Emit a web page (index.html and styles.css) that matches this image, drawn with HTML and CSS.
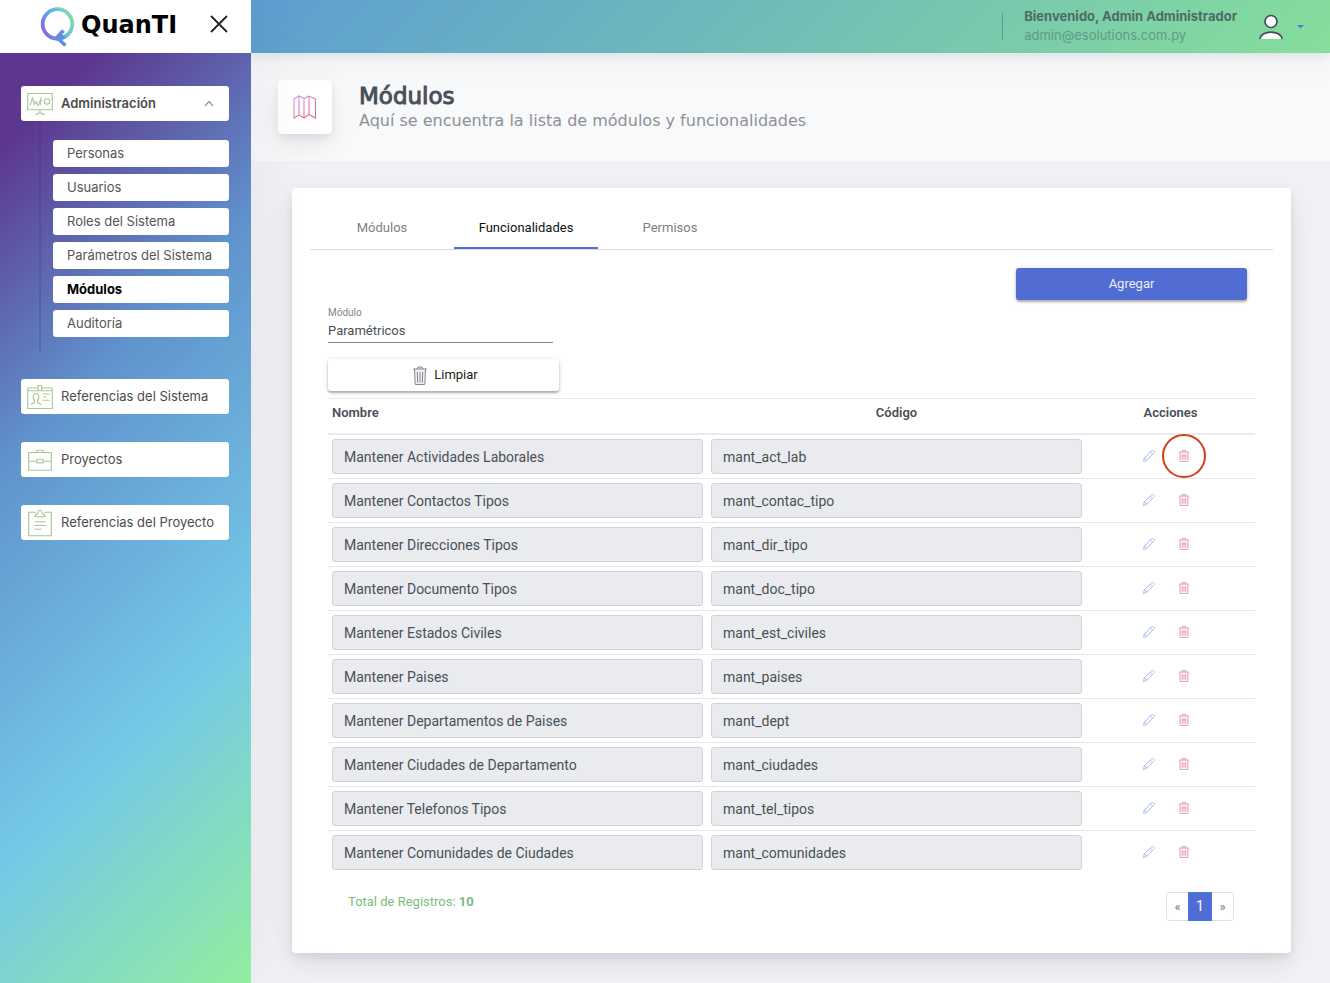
FILE: index.html
```html
<!DOCTYPE html>
<html lang="es">
<head>
<meta charset="utf-8">
<title>QuanTI - Módulos</title>
<link rel="stylesheet" href="styles.css">
</head>
<body>
<svg class="defs" width="0" height="0" aria-hidden="true">
  <defs>
    <linearGradient id="ring" x1="0" y1="0.7" x2="1" y2="0.2">
      <stop offset="0" stop-color="#7a6fe0"/><stop offset="0.5" stop-color="#62b6e2"/><stop offset="1" stop-color="#86e2a0"/>
    </linearGradient>
    <linearGradient id="pink" x1="0" y1="0" x2="26" y2="24" gradientUnits="userSpaceOnUse">
      <stop offset="0" stop-color="#d79be8"/><stop offset="1" stop-color="#d9607a"/>
    </linearGradient>
    <symbol id="pencil" viewBox="0 0 12 12">
      <path d="M.5 11.500l.8-3.400 7-7c.7-.7 1.700-.8 2.400-.1s.6 1.700-.1 2.400l-7 7zM7.200 2.200l2.400 2.400M1.300 8.100c1.200.1 2.200 1.100 2.300 2.300" fill="none" stroke="currentColor" stroke-width=".9"/>
    </symbol>
    <symbol id="trash" viewBox="0 0 10 12">
      <path d="M0 2.100h10M1.100 2.100v9.300h7.800V2.100M3.300 2V.5h3.400V2M3.300 4v5.800M5 4v5.800M6.700 4v5.800" fill="none" stroke="currentColor" stroke-width="1"/>
    </symbol>
  </defs>
</svg>
<div class="app">
  <aside class="sidebar">
    <div class="brand">
      <a class="logo" href="#">
        <svg width="36" height="40" viewBox="0 0 36 40" aria-hidden="true">
          <circle cx="17.500" cy="17" r="14.800" fill="none" stroke="url(#ring)" stroke-width="3.800"/>
          <path d="M15.500 32l8-8.500M15.500 31.500l9-1.500M17.500 31l8 7.500M21.500 24.500l-2 8" fill="none" stroke="#5f8ee0" stroke-width="3.600"/>
        </svg>
        <span>QuanTI</span>
      </a>
      <button class="close" type="button" aria-label="Cerrar menú">
        <svg width="18" height="18" viewBox="0 0 18 18"><path d="M1 1l16 16M17 1L1 17" fill="none" stroke="#222" stroke-width="1.800"/></svg>
      </button>
    </div>
    <nav class="menu">
      <div class="group">
        <a class="item open" href="#">
          <svg class="item-icon" width="26" height="26" viewBox="0 0 26 26"><path d="M.7 2.500h24.600v16.300H.7zM13 19v2.500M8.500 24l4.500-2.500 4.500 2.500M3 14l2.500-7 2 6.500 1.500-3 2 4 3.500-8M13 14.300l1.500-5.500" /><circle cx="20" cy="10.500" r="2.700"/></svg>
          <span>Administración</span>
          <svg class="chevron" width="10" height="7" viewBox="0 0 10 7"><path d="M1 6l4-4.500L9 6" fill="none" stroke="#999" stroke-width="1.300"/></svg>
        </a>
        <div class="submenu">
          <a href="#">Personas</a>
          <a href="#">Usuarios</a>
          <a href="#">Roles del Sistema</a>
          <a href="#">Parámetros del Sistema</a>
          <a class="current" href="#">Módulos</a>
          <a href="#">Auditoría</a>
        </div>
      </div>
      <a class="item" href="#">
        <svg class="item-icon" width="26" height="26" viewBox="0 0 26 26"><path d="M11 4H.7v20.500h24.600V4H14.500M.7 6.700H11M14.500 6.700h10.800M11 1.500h3.500v5.200H11zM15.500 10h7M16 13h3.500M15.500 16.300h7M3.500 20.500l4-1.700v-2.300c-2-2-1.800-7 1.500-7s3.500 5 1.500 7v2.300l4 1.700"/></svg>
        <span>Referencias del Sistema</span>
      </a>
      <a class="item" href="#">
        <svg class="item-icon" width="26" height="26" viewBox="0 0 26 26"><path d="M1.700 5.500h22.600v17.700H1.700zM10 5.500V3.300h6v2.200M1.700 14.200H10M16 14.200h8.300M10 12.300h6v3.700h-6z"/></svg>
        <span>Proyectos</span>
      </a>
      <a class="item" href="#">
        <svg class="item-icon" width="26" height="28" viewBox="0 0 26 28"><path d="M9 3.200H1.700v23.600h22.600V3.200H17M8 7.700h10c0-2-1.500-3-3-3.500 0-4-4-4-4 0-1.500.5-3 1.500-3 3.500zM7.500 12.700h11.200M7.500 16.500h11.200M7.500 20.200h7"/></svg>
        <span>Referencias del Proyecto</span>
      </a>
    </nav>
  </aside>

  <div class="page">
    <header class="topbar">
      <div class="user">
        <strong>Bienvenido, Admin Administrador</strong>
        <span>admin@esolutions.com.py</span>
      </div>
      <button class="account" type="button" aria-label="Cuenta">
        <svg width="24" height="26" viewBox="0 0 24 26"><circle cx="12" cy="7.500" r="6" fill="#fff" stroke="#444b54" stroke-width="1.700"/><path d="M.9 25c1.600-9.300 20.600-9.300 22.200 0z" fill="#fff"/><path d="M.9 25c1.600-9.300 20.600-9.300 22.200 0" fill="none" stroke="#444b54" stroke-width="1.700"/></svg>
        <svg width="7" height="4" viewBox="0 0 7 4"><path d="M0 0h7L3.500 3.500z" fill="#4f7bd0"/></svg>
      </button>
    </header>

    <div class="heading">
      <div class="heading-icon">
        <svg width="24" height="24" viewBox="0 0 24 24"><path d="M1 4L6 1l5 2.500L16 1l6.500 3v19L16 19.500 11 23l-5-3-5 3zM6 1v19M11 3.500V23M16 1v18.500" fill="none" stroke="url(#pink)" stroke-width="1.100"/></svg>
      </div>
      <div class="heading-text">
        <h1>Módulos</h1>
        <p>Aquí se encuentra la lista de módulos y funcionalidades</p>
      </div>
    </div>

    <main class="card">
      <div class="tabs" role="tablist">
        <button type="button" role="tab">Módulos</button>
        <button type="button" role="tab" class="active" aria-selected="true">Funcionalidades</button>
        <button type="button" role="tab">Permisos</button>
      </div>
      <div class="panel">
        <div class="actions"><button class="btn primary" type="button">Agregar</button></div>
        <div class="field">
          <label for="modulo">Módulo</label>
          <input id="modulo" type="text" value="Paramétricos">
        </div>
        <button class="btn plain" type="button">
          <svg width="14" height="20" viewBox="0 0 14 20"><path d="M0 3h14M1.500 3l.7 15.500h9.600L12.500 3M4 3l1-2h4l1 2M4.300 6l.4 10.500M7 6v10.500M9.700 6l-.4 10.500" fill="#eef0f2" stroke="#84898f" stroke-width="1"/></svg>
          Limpiar
        </button>
        <table class="grid">
          <thead><tr><th class="name">Nombre</th><th>Código</th><th class="ops">Acciones</th></tr></thead>
          <tbody id="rows"></tbody>
        </table>
        <div class="footer">
          <p>Total de Registros: <b>10</b></p>
          <nav class="pager" aria-label="Paginación">
            <a href="#" aria-label="Anterior">«</a><a class="active" href="#">1</a><a href="#" aria-label="Siguiente">»</a>
          </nav>
        </div>
      </div>
    </main>
  </div>
</div>
<script src="rows.js"></script>
</body>
</html>
```
FILE: rows.js
```js
const rows = [
  ["Mantener Actividades Laborales", "mant_act_lab"],
  ["Mantener Contactos Tipos", "mant_contac_tipo"],
  ["Mantener Direcciones Tipos", "mant_dir_tipo"],
  ["Mantener Documento Tipos", "mant_doc_tipo"],
  ["Mantener Estados Civiles", "mant_est_civiles"],
  ["Mantener Paises", "mant_paises"],
  ["Mantener Departamentos de Paises", "mant_dept"],
  ["Mantener Ciudades de Departamento", "mant_ciudades"],
  ["Mantener Telefonos Tipos", "mant_tel_tipos"],
  ["Mantener Comunidades de Ciudades", "mant_comunidades"]
];
document.getElementById("rows").innerHTML = rows.map(([name, code], i) => `
  <tr>
    <td><input type="text" aria-label="Nombre" value="${name}" readonly></td>
    <td><input type="text" aria-label="Código" value="${code}" readonly></td>
    <td><div class="row-ops">
      <button type="button" class="edit" aria-label="Editar"><svg width="12" height="12"><use href="#pencil"/></svg></button>
      <button type="button" class="remove${i === 0 ? " marked" : ""}" aria-label="Eliminar"><svg width="10" height="12"><use href="#trash"/></svg></button>
    </div></td>
  </tr>`).join("");
```
FILE: styles.css
```css
* { box-sizing: border-box; }
body {
  margin: 0;
  background: #f1f2f5;
  color: #495057;
  font: 13px/20px Roboto, sans-serif;
}
button, input { font: inherit; color: inherit; }
button { border: 0; padding: 0; background: none; cursor: pointer; }
a { color: inherit; text-decoration: none; }
h1, p { margin: 0; }
.defs { position: absolute; }
.app { display: flex; min-height: 100vh; }

.sidebar {
  position: relative;
  z-index: 2;
  flex: 0 0 251px;
  font-family: Inter, sans-serif;
  background: linear-gradient(135deg, #5c3690 12%, #6093cd 38%, #74c8e7 70%, #92eea0 100%);
  box-shadow: 7px 0 60px rgba(8, 10, 37, .05);
}
.brand {
  display: flex;
  align-items: center;
  justify-content: space-between;
  height: 53px;
  padding: 0 23px 0 40px;
  background: #fff;
}
.logo {
  display: flex;
  align-items: center;
  gap: 5px;
  font: bold 24px/32px "DejaVu Sans", sans-serif;
  color: #000;
}
.logo span { padding-bottom: 4px; }
.close { display: flex; padding-bottom: 6px; }
.menu { display: flex; flex-direction: column; gap: 28px; padding: 33px 22px 28px 21px; }
.item {
  display: flex;
  align-items: center;
  height: 35px;
  padding: 0 15px 0 6px;
  gap: 8px;
  border-radius: 3px;
  background: #fff;
  color: #4b4b4b;
  white-space: nowrap;
}
.item span { padding-bottom: 2px; }
.item-icon { flex: none; fill: none; stroke: #a9c795; stroke-width: 1.1; }
.item.open { font-weight: 600; }
.chevron { margin-left: auto; }
.submenu {
  display: flex;
  flex-direction: column;
  gap: 7px;
  margin-left: 18px;
  padding: 19px 0 14px 12px;
  border-left: 2px solid rgba(40, 50, 110, .2);
}
.submenu a {
  padding: 0 14px;
  border-radius: 3px;
  background: #fff;
  color: #555;
  line-height: 27px;
}
.submenu .current { color: #000; font-weight: 700; }

.page { flex: 1; min-width: 0; display: flex; flex-direction: column; }
.topbar {
  position: relative;
  z-index: 1;
  display: flex;
  align-items: center;
  justify-content: flex-end;
  gap: 22px;
  height: 53px;
  padding-right: 26px;
  font-family: Inter, sans-serif;
  background: linear-gradient(135deg, #5c9ed2, #86de9b);
  box-shadow: 0 7px 35px rgba(8, 10, 37, .05), 0 4px 9px rgba(8, 10, 37, .06);
}
.user {
  display: flex;
  flex-direction: column;
  justify-content: center;
  height: 27px;
  padding: 0 0 2px 21px;
  border-left: 1px solid rgba(60, 110, 100, .5);
  line-height: 19px;
}
.user strong { color: #4c6c66; }
.user span { color: #5c9c86; }
.account { display: flex; align-items: center; gap: 14px; }

.heading {
  display: flex;
  gap: 27px;
  padding: 27px;
  background: #f8f9fb;
}
.heading-icon {
  display: grid;
  place-items: center;
  width: 54px;
  height: 54px;
  border-radius: 4px;
  background: #fff;
  box-shadow: 0 7px 35px rgba(8, 10, 37, .05), 0 15px 22px rgba(8, 10, 37, .03), 0 4px 9px rgba(8, 10, 37, .07);
}
.heading-text { padding-top: 4px; font-family: "DejaVu Sans", sans-serif; }
.heading h1 { font-size: 23px; line-height: 24px; font-weight: 400; -webkit-text-stroke: 1px #495057; }
.heading p { padding-top: 3px; font-size: 16px; line-height: 20px; color: #8d9095; }

.card {
  margin: 27px 39px 30px 41px;
  padding: 18px 18px 14px;
  border-radius: 4px;
  background: #fff;
  box-shadow: 0 7px 35px rgba(8, 10, 37, .06), 0 15px 22px rgba(8, 10, 37, .04), 0 4px 9px rgba(8, 10, 37, .07);
}
.tabs { display: flex; border-bottom: 1px solid #dcdcde; }
.tabs button { width: 144px; height: 43px; padding-top: 2px; border-bottom: 2px solid transparent; color: #808080; }
.tabs .active { border-color: #526dd3; color: #111; }
.panel { padding: 18px; }
.actions { display: flex; justify-content: flex-end; padding-right: 8px; }
.btn {
  display: flex;
  align-items: center;
  justify-content: center;
  gap: 7px;
  width: 231px;
  height: 32px;
  border-radius: 3px;
  box-shadow: 0 1px 5px rgba(0, 0, 0, .16), 0 2px 2px rgba(0, 0, 0, .24);
}
.primary { background: #516dd3; color: #e9edff; }
.plain { margin-top: 16px; padding-left: 4px; background: #fff; color: #222; }
.plain svg { margin-top: 2px; }
.field { display: flex; flex-direction: column; width: 225px; margin-top: 7px; }
.field label { font-size: 10px; line-height: 12px; color: #858585; }
.field input { height: 24px; padding: 0; border: 0; border-bottom: 1px solid #888; background: none; }

.grid { width: 100%; margin-top: 7px; border-spacing: 0; table-layout: fixed; }
.grid th {
  height: 37px;
  padding: 0 4px 6px;
  border-top: 1px solid #e6e8ec;
  border-bottom: 2px solid #e9ebf0;
  font-weight: 600;
}
.grid .name { text-align: left; }
.grid .ops { width: 169px; }
.grid td { padding: 4px; border-bottom: 1px solid #e6e8ec; }
.grid tr:last-child td { border-bottom: 0; }
.grid input {
  display: block;
  width: 100%;
  height: 35px;
  padding: 0 11px;
  border: 1px solid #ced3da;
  border-radius: 3px;
  background: #e9ebef;
  font-size: 14px;
}
.row-ops { display: flex; justify-content: center; gap: 24px; padding: 0 10px 2px 0; }
.row-ops button { position: relative; display: flex; }
.edit { color: #a3b4f0; }
.remove { color: #e59ba7; }
.marked::after {
  content: "";
  position: absolute;
  inset: -16px -17px;
  border: 2px solid #d53d12;
  border-radius: 50%;
}
.footer { display: flex; justify-content: space-between; padding: 18px 21px 0 20px; }
.footer p { color: #79bd80; line-height: 20px; }
.footer b { font-weight: 700; }
.pager { display: flex; height: 29px; border: 1px solid #dee2e6; border-radius: 3px; }
.pager a { width: 21px; line-height: 27px; text-align: center; color: #6c757d; }
.pager .active { width: 24px; margin: -1px 0; border: 1px solid #3f7af5; background: #516dd3; color: #fff; font-size: 14px; }
```
